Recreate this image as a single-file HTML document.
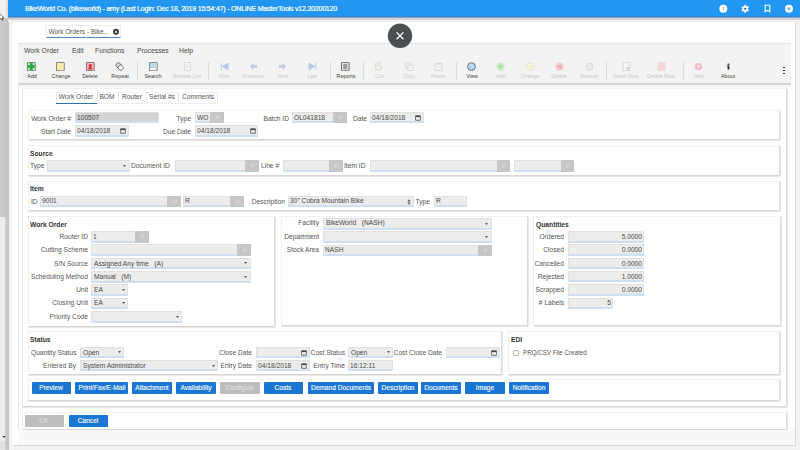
<!DOCTYPE html>
<html><head><meta charset="utf-8"><style>
html,body{margin:0;padding:0;width:800px;height:450px;overflow:hidden;background:#f1f1f1;}
body>div,body>svg{position:absolute;}
.t{font-family:'Liberation Sans',sans-serif;white-space:nowrap;line-height:1;}
</style></head><body>
<div style="left:0px;top:0px;width:800px;height:450px;background:#f3f3f3;"></div>
<div style="left:0px;top:0px;width:8px;height:17.5px;background:#f2f2f2;"></div>
<div style="left:5px;top:0px;width:3px;height:17.5px;background:linear-gradient(90deg,#f2f2f2,#d6d6d6);"></div>
<div style="left:0px;top:17.5px;width:9px;height:199px;background:linear-gradient(90deg,#cdcdcd,#c4c4c4);"></div>
<div style="left:0px;top:216.5px;width:4.5px;height:234px;background:#eeeeee;"></div>
<div style="left:4.5px;top:216.5px;width:4.5px;height:234px;background:linear-gradient(90deg,#cfcfcf,#c2c2c2);"></div>
<div style="left:0px;top:441px;width:4.5px;height:9px;background:#e2e2e2;"></div>
<svg style="left:1.5px;top:435px;width:4px;height:4px" viewBox="0 0 4 4"><path d="M0.5 1 H3.5 L2 3 Z" fill="#333"/></svg>
<svg style="left:0;top:12.5px;width:6px;height:9px" viewBox="0 0 6 9"><path d="M-0.5 0.5 L-0.5 6.5 L1 5.3 L2 7.5 L3 7.1 L2.1 5 L4 5 Z" fill="#fff" stroke="#333" stroke-width="0.7"/></svg>
<div style="left:8px;top:0px;width:792px;height:16px;background:#2196f3;"></div>
<div style="left:8px;top:16px;width:792px;height:1px;background:#2a8ad8;"></div>
<div style="left:8px;top:17px;width:792px;height:1px;background:#7fa6c8;"></div>
<div style="left:8px;top:18px;width:792px;height:2px;background:#d3d3d3;"></div>
<div style="left:8px;top:20px;width:792px;height:2px;background:#eeeeee;"></div>
<div class="t" style="left:25px;top:5.23px;font-size:7px;color:#fff;letter-spacing:-0.2px;-webkit-text-stroke:0.2px #fff;">BikeWorld Co. (bikeworld) - amy (Last Login: Dec 18, 2019 15:54:47) - ONLINE MasterTools v12.20200120</div>
<svg style="left:718px;top:4px;width:11px;height:10px" viewBox="0 0 11 10"><circle cx="5.3" cy="4.8" r="4" fill="#fff"/><rect x="4.95" y="3" width="0.7" height="3.2" fill="#d88a6a"/></svg>
<svg style="left:740px;top:4px;width:11px;height:10px" viewBox="-5.2 -4.8 11 10"><g fill="#fff"><circle r="2.9"/><rect x="-0.9" y="-3.9" width="1.8" height="1.8" transform="rotate(0)"/><rect x="-0.9" y="-3.9" width="1.8" height="1.8" transform="rotate(60)"/><rect x="-0.9" y="-3.9" width="1.8" height="1.8" transform="rotate(120)"/><rect x="-0.9" y="-3.9" width="1.8" height="1.8" transform="rotate(180)"/><rect x="-0.9" y="-3.9" width="1.8" height="1.8" transform="rotate(240)"/><rect x="-0.9" y="-3.9" width="1.8" height="1.8" transform="rotate(300)"/></g><circle r="1.1" fill="#2a6fb8"/></svg>
<svg style="left:762px;top:4px;width:11px;height:10px" viewBox="0 0 11 10"><path d="M3.2 1.2 H7.8 V7.8 L5.5 6.3 L3.2 7.8 Z" fill="none" stroke="#fff" stroke-width="1.1"/></svg>
<svg style="left:784px;top:4px;width:11px;height:10px" viewBox="0 0 11 10"><circle cx="5" cy="4.8" r="4" fill="#fff"/><path d="M3.6 3.4 L6.4 6.2 M6.4 3.4 L3.6 6.2" stroke="#2196f3" stroke-width="0.9"/></svg>
<div style="left:9px;top:22px;width:5px;height:423.5px;background:linear-gradient(90deg,#f1f1f1,#f8f8f8);"></div>
<div style="left:13px;top:22px;width:782.5px;height:423.5px;background:#fff;border-right:1px solid #d9d9d9;border-bottom:1px solid #d9d9d9;box-sizing:border-box;"></div>
<div style="left:46.2px;top:24.5px;width:75.3px;height:13px;background:#fff;border:1px solid #ececec;border-bottom:1.5px solid #4a86c5;box-sizing:border-box;"></div>
<div class="t" style="left:48.4px;top:28.87px;font-size:6.5px;color:#555;">Work Orders - Bike...</div>
<svg style="left:112px;top:27.5px;width:8px;height:8px" viewBox="0 0 8 8"><circle cx="4" cy="3.8" r="3" fill="#333"/><path d="M2.8 2.6 L5.2 5 M5.2 2.6 L2.8 5" stroke="#fff" stroke-width="0.9"/></svg>
<div style="left:17.5px;top:43px;width:773.5px;height:40px;background:#f3f3f3;border-top:1px solid #e2e2e2;box-sizing:border-box;"></div>
<div style="left:17.5px;top:83px;width:773.5px;height:2px;background:#d5d5d5;"></div>
<div style="left:19px;top:85px;width:772px;height:3px;background:#f8f8f8;"></div>
<div class="t" style="left:23.5px;top:47.23px;font-size:7px;color:#444;transform:scaleX(0.97);transform-origin:0 0;">Work Order</div>
<div class="t" style="left:71.5px;top:47.23px;font-size:7px;color:#444;transform:scaleX(0.97);transform-origin:0 0;">Edit</div>
<div class="t" style="left:95px;top:47.23px;font-size:7px;color:#444;transform:scaleX(0.97);transform-origin:0 0;">Functions</div>
<div class="t" style="left:136.5px;top:47.23px;font-size:7px;color:#444;transform:scaleX(0.97);transform-origin:0 0;">Processes</div>
<div class="t" style="left:179px;top:47.23px;font-size:7px;color:#444;transform:scaleX(0.97);transform-origin:0 0;">Help</div>
<div class="t" style="left:-118px;width:300px;text-align:center;top:74.20px;font-size:5.4px;color:#444;">Add</div>
<div class="t" style="left:-89px;width:300px;text-align:center;top:74.20px;font-size:5.4px;color:#444;">Change</div>
<div class="t" style="left:-60px;width:300px;text-align:center;top:74.20px;font-size:5.4px;color:#444;">Delete</div>
<div class="t" style="left:-30px;width:300px;text-align:center;top:74.20px;font-size:5.4px;color:#444;">Repeat</div>
<div class="t" style="left:3px;width:300px;text-align:center;top:74.20px;font-size:5.4px;color:#444;">Search</div>
<div class="t" style="left:37px;width:300px;text-align:center;top:74.20px;font-size:5.4px;color:#c9c9c9;">Browse List</div>
<div class="t" style="left:74px;width:300px;text-align:center;top:74.20px;font-size:5.4px;color:#c9c9c9;">First</div>
<div class="t" style="left:103px;width:300px;text-align:center;top:74.20px;font-size:5.4px;color:#c9c9c9;">Previous</div>
<div class="t" style="left:132.5px;width:300px;text-align:center;top:74.20px;font-size:5.4px;color:#c9c9c9;">Next</div>
<div class="t" style="left:162px;width:300px;text-align:center;top:74.20px;font-size:5.4px;color:#c9c9c9;">Last</div>
<div class="t" style="left:196px;width:300px;text-align:center;top:74.20px;font-size:5.4px;color:#444;">Reports</div>
<div class="t" style="left:229.5px;width:300px;text-align:center;top:74.20px;font-size:5.4px;color:#c9c9c9;">Cut</div>
<div class="t" style="left:259px;width:300px;text-align:center;top:74.20px;font-size:5.4px;color:#c9c9c9;">Copy</div>
<div class="t" style="left:288px;width:300px;text-align:center;top:74.20px;font-size:5.4px;color:#c9c9c9;">Paste</div>
<div class="t" style="left:322px;width:300px;text-align:center;top:74.20px;font-size:5.4px;color:#444;">View</div>
<div class="t" style="left:351px;width:300px;text-align:center;top:74.20px;font-size:5.4px;color:#c9c9c9;">Add</div>
<div class="t" style="left:380px;width:300px;text-align:center;top:74.20px;font-size:5.4px;color:#c9c9c9;">Change</div>
<div class="t" style="left:409px;width:300px;text-align:center;top:74.20px;font-size:5.4px;color:#c9c9c9;">Delete</div>
<div class="t" style="left:439px;width:300px;text-align:center;top:74.20px;font-size:5.4px;color:#c9c9c9;">Repeat</div>
<div class="t" style="left:476px;width:300px;text-align:center;top:74.20px;font-size:5.4px;color:#c9c9c9;">Insert Row</div>
<div class="t" style="left:511px;width:300px;text-align:center;top:74.20px;font-size:5.4px;color:#c9c9c9;">Delete Row</div>
<div class="t" style="left:549px;width:300px;text-align:center;top:74.20px;font-size:5.4px;color:#c9c9c9;">Help</div>
<div class="t" style="left:578px;width:300px;text-align:center;top:74.20px;font-size:5.4px;color:#444;">About</div>
<div style="left:137px;top:62px;width:0.8px;height:18px;background:#dcdcdc;"></div>
<div style="left:207.5px;top:62px;width:0.8px;height:18px;background:#dcdcdc;"></div>
<div style="left:329.5px;top:62px;width:0.8px;height:18px;background:#dcdcdc;"></div>
<div style="left:363px;top:62px;width:0.8px;height:18px;background:#dcdcdc;"></div>
<div style="left:455.5px;top:62px;width:0.8px;height:18px;background:#dcdcdc;"></div>
<div style="left:606px;top:62px;width:0.8px;height:18px;background:#dcdcdc;"></div>
<div style="left:682.5px;top:62px;width:0.8px;height:18px;background:#dcdcdc;"></div>
<svg style="left:27.0px;top:62px;width:9px;height:9px" viewBox="0 0 9 9"><rect x="0.4" y="0.4" width="7.8" height="8.4" rx="0.6" fill="#d2f7d2" stroke="#4d524d" stroke-width="0.8"/><path d="M4.3 1 V8.2 M0.9 4.6 H7.7" stroke="#2db548" stroke-width="3"/><path d="M4.3 2.2 V7 M2.1 4.6 H6.5" stroke="#22a83c" stroke-width="1.2"/></svg>
<svg style="left:56.0px;top:62px;width:9px;height:9px" viewBox="0 0 9 9"><rect x="0.4" y="0.4" width="7.8" height="8.4" rx="0.6" fill="#fbf6d8" stroke="#555" stroke-width="0.8"/><path d="M1.2 7.8 L7.4 1.2 V4.5 L4.5 7.8 Z" fill="#f0e27a"/><path d="M1.2 1.2 H7.4 V3 L3 7.8 H1.2 Z" fill="#f7efb0"/></svg>
<svg style="left:85.5px;top:62px;width:9px;height:9px" viewBox="0 0 9 9"><rect x="0.4" y="0.4" width="7.8" height="8.4" rx="0.6" fill="#f3b9bd" stroke="#5a4f50" stroke-width="0.8"/><path d="M2 7.5 Q4.3 1.2 6.6 7.5 Z" fill="#e2283a"/><circle cx="4.3" cy="3.6" r="1.6" fill="#e2283a"/></svg>
<svg style="left:115.0px;top:62px;width:9px;height:9px" viewBox="0 0 9 9"><rect x="1.2" y="1" width="4.6" height="4.6" rx="1.4" transform="rotate(40 3.5 3.3)" fill="#d8d8d8" stroke="#5e5e5e" stroke-width="0.9"/><rect x="3.4" y="3.4" width="4.6" height="4.6" rx="1.4" transform="rotate(40 5.7 5.7)" fill="#fff" stroke="#5e5e5e" stroke-width="0.9"/></svg>
<svg style="left:148.5px;top:62px;width:9px;height:9px" viewBox="0 0 9 9"><rect x="0.4" y="0.4" width="7.8" height="8.4" rx="0.6" fill="#fff" stroke="#555" stroke-width="0.8"/><rect x="0.9" y="0.9" width="6.8" height="5.2" fill="#b9dbe9"/></svg>
<svg style="left:182.5px;top:62px;width:9px;height:9px" viewBox="0 0 9 9"><rect x="1.5" y="0.5" width="6" height="8" fill="#f7f7f7" stroke="#d4d4d4" stroke-width="0.8"/><path d="M3 3 H6 M3 4.5 H6 M3 6 H6" stroke="#dadada" stroke-width="0.6"/></svg>
<svg style="left:219.5px;top:62px;width:9px;height:9px" viewBox="0 0 9 9"><path d="M1.3 1 V8 M8 1.2 L2.5 4.5 L8 7.8 Z" stroke="#b5cbe8" fill="#b5cbe8" stroke-width="1"/></svg>
<svg style="left:248.5px;top:62px;width:9px;height:9px" viewBox="0 0 9 9"><path d="M1 4.5 L4.5 1.2 V3.2 H8 V5.8 H4.5 V7.8 Z" fill="#b7cbe8"/></svg>
<svg style="left:278.0px;top:62px;width:9px;height:9px" viewBox="0 0 9 9"><path d="M8 4.5 L4.5 1.2 V3.2 H1 V5.8 H4.5 V7.8 Z" fill="#b7cbe8"/></svg>
<svg style="left:307.5px;top:62px;width:9px;height:9px" viewBox="0 0 9 9"><path d="M7.7 1 V8 M1 1.2 L6.5 4.5 L1 7.8 Z" stroke="#b5cbe8" fill="#b5cbe8" stroke-width="1"/></svg>
<svg style="left:341.0px;top:62px;width:9px;height:9px" viewBox="0 0 9 9"><rect x="0.5" y="0.4" width="7.6" height="8.4" rx="0.5" fill="#f0f0f0" stroke="#5b5b5b" stroke-width="0.9"/><rect x="2.2" y="1.8" width="4.2" height="5.6" fill="#9c9c9c"/></svg>
<svg style="left:375.0px;top:62px;width:9px;height:9px" viewBox="0 0 9 9"><rect x="0.8" y="0.8" width="5" height="7" fill="#f4f4f4" stroke="#d2d2d2" stroke-width="0.8"/><path d="M1.8 3 H4.5 M1.8 5 H4.5" stroke="#d8d8d8" stroke-width="0.6"/><path d="M5.2 3.5 L8.5 5.2 L5.6 7.8 Z" fill="#eadcca"/></svg>
<svg style="left:404.5px;top:62px;width:9px;height:9px" viewBox="0 0 9 9"><rect x="0.8" y="0.8" width="5" height="5.5" fill="#f4f4f4" stroke="#d2d2d2" stroke-width="0.8"/><rect x="3" y="3" width="5" height="5.5" fill="#f4f4f4" stroke="#d2d2d2" stroke-width="0.8"/></svg>
<svg style="left:433.5px;top:62px;width:9px;height:9px" viewBox="0 0 9 9"><rect x="1" y="1.5" width="7" height="7" fill="#f2f2f2" stroke="#d2d2d2" stroke-width="0.8"/><rect x="3" y="0.5" width="3" height="2" fill="#d8d8d8"/></svg>
<svg style="left:467.0px;top:62px;width:9px;height:9px" viewBox="0 0 9 9"><circle cx="4.5" cy="4.6" r="3.9" fill="#a9d3e6" stroke="#646a72" stroke-width="0.9"/><path d="M2.5 3.5 Q4 2 5.5 3.2 Q5 5 6.8 6" fill="none" stroke="#e6f3f8" stroke-width="0.9"/></svg>
<svg style="left:496.0px;top:62px;width:9px;height:9px" viewBox="0 0 9 9"><circle cx="4.5" cy="4.6" r="3.9" fill="#c9f0c4" stroke="#d4dcd4" stroke-width="0.7"/><path d="M4.5 2.2 V7 M2.1 4.6 H6.9" stroke="#9fdc98" stroke-width="1.4"/></svg>
<svg style="left:525.5px;top:62px;width:9px;height:9px" viewBox="0 0 9 9"><circle cx="4.5" cy="4.6" r="3.9" fill="#f3f3dc" stroke="#dcdcd0" stroke-width="0.7"/><circle cx="4.5" cy="4.6" r="1.6" fill="#f6f0b8"/></svg>
<svg style="left:554.5px;top:62px;width:9px;height:9px" viewBox="0 0 9 9"><circle cx="4.5" cy="4.6" r="3.9" fill="#f6caca" stroke="#e4d4d4" stroke-width="0.6"/><path d="M2.5 4.6 H6.5" stroke="#ea9a9a" stroke-width="1.3"/></svg>
<svg style="left:584.5px;top:62px;width:9px;height:9px" viewBox="0 0 9 9"><circle cx="4.5" cy="4.6" r="3.6" fill="#f0f0f0" stroke="#cdcdcd" stroke-width="0.8"/><circle cx="4.5" cy="4.6" r="1.6" fill="none" stroke="#d2d2d2" stroke-width="0.7"/></svg>
<svg style="left:621.5px;top:62px;width:9px;height:9px" viewBox="0 0 9 9"><rect x="1" y="0.8" width="7" height="7.6" fill="#f4f4f4" stroke="#cfcfcf" stroke-width="0.8"/><rect x="4.5" y="5" width="2.5" height="2.5" fill="#b9d9b4"/></svg>
<svg style="left:656.5px;top:62px;width:9px;height:9px" viewBox="0 0 9 9"><rect x="1" y="0.8" width="7" height="7.6" fill="#f6dada" stroke="#eed0d0" stroke-width="0.6"/><path d="M1 3.5 H8 M1 6 H8" stroke="#f0caca" stroke-width="0.6"/></svg>
<svg style="left:694.0px;top:62px;width:9px;height:9px" viewBox="0 0 9 9"><circle cx="4.5" cy="4.6" r="3.7" fill="#f6bcc3"/><path d="M2.6 3.6 Q4.5 2.8 6.4 3.6 L4.5 6.8 Z" fill="#fce4e7"/></svg>
<svg style="left:723.5px;top:62px;width:9px;height:9px" viewBox="0 0 9 9"><rect x="3.6" y="1.6" width="1.8" height="1.3" fill="#222"/><path d="M3.1 3.6 H5.3 V7.6 H3.6 V4.4 H3.1 Z" fill="#222"/></svg>
<div style="left:783.3px;top:66.5px;width:1.5px;height:1.5px;background:#333;"></div>
<div style="left:783.3px;top:69.5px;width:1.5px;height:1.5px;background:#333;"></div>
<div style="left:783.3px;top:72.5px;width:1.5px;height:1.5px;background:#333;"></div>
<div style="left:18px;top:83px;width:1px;height:347px;background:#e6e6e6;"></div>
<div style="left:22px;top:88px;width:765px;height:319px;background:#fff;border:1px solid #f1f1f1;border-right-color:#dadada;border-bottom-color:#d6d6d6;border-radius:1.5px;box-shadow:0.3px 0.5px 0.8px rgba(0,0,0,.10);box-sizing:border-box;"></div>
<div style="left:55.6px;top:92px;width:162.2px;height:12px;border:1px solid #f0f0f0;border-bottom-color:#ececec;box-sizing:border-box;"></div>
<div class="t" style="left:-73.8px;width:300px;text-align:center;top:93.23px;font-size:7.0px;color:#555;transform:scaleX(0.95);transform-origin:50% 0;">Work Order</div>
<div class="t" style="left:-42.80000000000001px;width:300px;text-align:center;top:93.23px;font-size:7.0px;color:#555;transform:scaleX(0.95);transform-origin:50% 0;">BOM</div>
<div class="t" style="left:-18.350000000000023px;width:300px;text-align:center;top:93.23px;font-size:7.0px;color:#555;transform:scaleX(0.95);transform-origin:50% 0;">Router</div>
<div class="t" style="left:12.050000000000011px;width:300px;text-align:center;top:93.23px;font-size:7.0px;color:#555;transform:scaleX(0.95);transform-origin:50% 0;">Serial #s</div>
<div class="t" style="left:48.10000000000002px;width:300px;text-align:center;top:93.23px;font-size:7.0px;color:#555;transform:scaleX(0.95);transform-origin:50% 0;">Comments</div>
<div style="left:55.6px;top:92px;width:1px;height:12px;background:#e9e9e9;"></div>
<div style="left:97px;top:92px;width:1px;height:12px;background:#e9e9e9;"></div>
<div style="left:118px;top:92px;width:1px;height:12px;background:#e9e9e9;"></div>
<div style="left:145.5px;top:92px;width:1px;height:12px;background:#e9e9e9;"></div>
<div style="left:178.4px;top:92px;width:1px;height:12px;background:#e9e9e9;"></div>
<div style="left:217.3px;top:92px;width:1px;height:12px;background:#e9e9e9;"></div>
<div style="left:55.6px;top:103px;width:41.6px;height:1.2px;background:#2f6fb8;"></div>
<div style="left:28px;top:110px;width:752px;height:30px;background:#fff;border:1px solid #f1f1f1;border-right-color:#dadada;border-bottom-color:#d6d6d6;border-radius:1.5px;box-shadow:0.3px 0.5px 0.8px rgba(0,0,0,.10);box-sizing:border-box;"></div>
<div class="t" style="left:-229px;width:300px;text-align:right;top:115.00px;font-size:7.0px;color:#555;transform:scaleX(0.95);transform-origin:100% 0;">Work Order #</div>
<div style="left:74.5px;top:112px;width:84.19999999999999px;height:11.200000000000003px;background:#d3d3d3;border:0.8px solid #e0e0e0;border-bottom:2px solid #cde0f3;border-radius:1px;box-sizing:border-box;"></div>
<div class="t" style="left:76.7px;top:114.00px;font-size:7.0px;color:#4a4a4a;transform:scaleX(0.95);transform-origin:0 0;">100507</div>
<div class="t" style="left:-229px;width:300px;text-align:right;top:128.00px;font-size:7.0px;color:#555;transform:scaleX(0.95);transform-origin:100% 0;">Start Date</div>
<div style="left:74.5px;top:125px;width:54.0px;height:11.5px;background:#ececec;border:0.8px solid #e0e0e0;border-bottom:2px solid #cde0f3;border-radius:1px;box-sizing:border-box;"></div>
<div class="t" style="left:76.7px;top:127.00px;font-size:7.0px;color:#4a4a4a;transform:scaleX(0.95);transform-origin:0 0;">04/18/2018</div>
<svg style="left:120.0px;top:127.95000000000002px;width:6px;height:6px" viewBox="0 0 6 6"><rect x="0.7" y="0.8" width="4.6" height="4.4" fill="none" stroke="#444" stroke-width="0.7"/><rect x="0.7" y="0.8" width="4.6" height="1.3" fill="#444"/></svg>
<div class="t" style="left:-108.6px;width:300px;text-align:right;top:115.00px;font-size:7.0px;color:#555;transform:scaleX(0.95);transform-origin:100% 0;">Type</div>
<div style="left:195px;top:112px;width:28.80000000000001px;height:11.200000000000003px;background:#ececec;border:0.8px solid #e0e0e0;border-bottom:2px solid #cde0f3;border-radius:1px;box-sizing:border-box;"></div>
<div class="t" style="left:197.2px;top:114.00px;font-size:7.0px;color:#4a4a4a;transform:scaleX(0.95);transform-origin:0 0;">WO</div>
<div style="left:210.3px;top:112px;width:13.5px;height:11.200000000000003px;background:#c6c6c6;"></div>
<svg style="left:214.8px;top:114.89999999999999px;width:5px;height:5px" viewBox="0 0 5 5"><circle cx="2.8" cy="2.2" r="1.5" fill="none" stroke="#e4e4e4" stroke-width="0.7"/><path d="M1.8 3.2 L0.6 4.4" stroke="#e4e4e4" stroke-width="0.8"/></svg>
<div class="t" style="left:-108.6px;width:300px;text-align:right;top:128.00px;font-size:7.0px;color:#555;transform:scaleX(0.95);transform-origin:100% 0;">Due Date</div>
<div style="left:195px;top:125px;width:63px;height:11.5px;background:#ececec;border:0.8px solid #e0e0e0;border-bottom:2px solid #cde0f3;border-radius:1px;box-sizing:border-box;"></div>
<div class="t" style="left:197.2px;top:127.00px;font-size:7.0px;color:#4a4a4a;transform:scaleX(0.95);transform-origin:0 0;">04/18/2018</div>
<svg style="left:249.5px;top:127.95000000000002px;width:6px;height:6px" viewBox="0 0 6 6"><rect x="0.7" y="0.8" width="4.6" height="4.4" fill="none" stroke="#444" stroke-width="0.7"/><rect x="0.7" y="0.8" width="4.6" height="1.3" fill="#444"/></svg>
<div class="t" style="left:-11.399999999999977px;width:300px;text-align:right;top:115.00px;font-size:7.0px;color:#555;transform:scaleX(0.95);transform-origin:100% 0;">Batch ID</div>
<div style="left:291.6px;top:112px;width:55.099999999999966px;height:11.200000000000003px;background:#ececec;border:0.8px solid #e0e0e0;border-bottom:2px solid #cde0f3;border-radius:1px;box-sizing:border-box;"></div>
<div class="t" style="left:293.8px;top:114.00px;font-size:7.0px;color:#4a4a4a;transform:scaleX(0.95);transform-origin:0 0;">OL041818</div>
<div style="left:333.2px;top:112px;width:13.5px;height:11.200000000000003px;background:#c6c6c6;"></div>
<svg style="left:337.7px;top:114.89999999999999px;width:5px;height:5px" viewBox="0 0 5 5"><circle cx="2.8" cy="2.2" r="1.5" fill="none" stroke="#e4e4e4" stroke-width="0.7"/><path d="M1.8 3.2 L0.6 4.4" stroke="#e4e4e4" stroke-width="0.8"/></svg>
<div class="t" style="left:66.5px;width:300px;text-align:right;top:115.00px;font-size:7.0px;color:#555;transform:scaleX(0.95);transform-origin:100% 0;">Date</div>
<div style="left:370px;top:112px;width:53.80000000000001px;height:11.200000000000003px;background:#ececec;border:0.8px solid #e0e0e0;border-bottom:2px solid #cde0f3;border-radius:1px;box-sizing:border-box;"></div>
<div class="t" style="left:372.2px;top:114.00px;font-size:7.0px;color:#4a4a4a;transform:scaleX(0.95);transform-origin:0 0;">04/18/2018</div>
<svg style="left:415.3px;top:114.8px;width:6px;height:6px" viewBox="0 0 6 6"><rect x="0.7" y="0.8" width="4.6" height="4.4" fill="none" stroke="#444" stroke-width="0.7"/><rect x="0.7" y="0.8" width="4.6" height="1.3" fill="#444"/></svg>
<div style="left:28px;top:145px;width:752px;height:31px;background:#fff;border:1px solid #f1f1f1;border-right-color:#dadada;border-bottom-color:#d6d6d6;border-radius:1.5px;box-shadow:0.3px 0.5px 0.8px rgba(0,0,0,.10);box-sizing:border-box;"></div>
<div class="t" style="left:30px;top:150.00px;font-size:7.3px;color:#333;font-weight:bold;transform:scaleX(0.92);transform-origin:0 0;">Source</div>
<div class="t" style="left:30px;top:162.00px;font-size:7.0px;color:#555;transform:scaleX(0.95);transform-origin:0 0;">Type</div>
<div style="left:47.2px;top:160.3px;width:82.49999999999999px;height:11.5px;background:#ececec;border:0.8px solid #e0e0e0;border-bottom:2px solid #cde0f3;border-radius:1px;box-sizing:border-box;"></div>
<svg style="left:123.19999999999999px;top:164.85000000000002px;width:3px;height:2px" viewBox="0 0 3 2"><path d="M0 0 H3 L1.5 2 Z" fill="#555"/></svg>
<div class="t" style="left:131.3px;top:162.00px;font-size:7.0px;color:#555;transform:scaleX(0.95);transform-origin:0 0;">Document ID</div>
<div style="left:174.5px;top:160.3px;width:84.25px;height:11.5px;background:#ececec;border:0.8px solid #e0e0e0;border-bottom:2px solid #cde0f3;border-radius:1px;box-sizing:border-box;"></div>
<div style="left:245.25px;top:160.3px;width:13.5px;height:11.5px;background:#c6c6c6;"></div>
<svg style="left:249.75px;top:163.35000000000002px;width:5px;height:5px" viewBox="0 0 5 5"><circle cx="2.8" cy="2.2" r="1.5" fill="none" stroke="#e4e4e4" stroke-width="0.7"/><path d="M1.8 3.2 L0.6 4.4" stroke="#e4e4e4" stroke-width="0.8"/></svg>
<div class="t" style="left:261.3px;top:162.00px;font-size:7.0px;color:#555;transform:scaleX(0.95);transform-origin:0 0;">Line #</div>
<div style="left:283px;top:160.3px;width:59.5px;height:11.5px;background:#ececec;border:0.8px solid #e0e0e0;border-bottom:2px solid #cde0f3;border-radius:1px;box-sizing:border-box;"></div>
<div style="left:329.0px;top:160.3px;width:13.5px;height:11.5px;background:#c6c6c6;"></div>
<svg style="left:333.5px;top:163.35000000000002px;width:5px;height:5px" viewBox="0 0 5 5"><circle cx="2.8" cy="2.2" r="1.5" fill="none" stroke="#e4e4e4" stroke-width="0.7"/><path d="M1.8 3.2 L0.6 4.4" stroke="#e4e4e4" stroke-width="0.8"/></svg>
<div class="t" style="left:343.8px;top:162.00px;font-size:7.0px;color:#555;transform:scaleX(0.95);transform-origin:0 0;">Item ID</div>
<div style="left:370px;top:160.3px;width:140.2px;height:11.5px;background:#ececec;border:0.8px solid #e0e0e0;border-bottom:2px solid #cde0f3;border-radius:1px;box-sizing:border-box;"></div>
<div style="left:496.7px;top:160.3px;width:13.5px;height:11.5px;background:#c6c6c6;"></div>
<svg style="left:501.2px;top:163.35000000000002px;width:5px;height:5px" viewBox="0 0 5 5"><circle cx="2.8" cy="2.2" r="1.5" fill="none" stroke="#e4e4e4" stroke-width="0.7"/><path d="M1.8 3.2 L0.6 4.4" stroke="#e4e4e4" stroke-width="0.8"/></svg>
<div style="left:514px;top:160.3px;width:60px;height:11.5px;background:#ececec;border:0.8px solid #e0e0e0;border-bottom:2px solid #cde0f3;border-radius:1px;box-sizing:border-box;"></div>
<div style="left:560.5px;top:160.3px;width:13.5px;height:11.5px;background:#c6c6c6;"></div>
<svg style="left:565px;top:163.35000000000002px;width:5px;height:5px" viewBox="0 0 5 5"><circle cx="2.8" cy="2.2" r="1.5" fill="none" stroke="#e4e4e4" stroke-width="0.7"/><path d="M1.8 3.2 L0.6 4.4" stroke="#e4e4e4" stroke-width="0.8"/></svg>
<div style="left:28px;top:181px;width:752px;height:30px;background:#fff;border:1px solid #f1f1f1;border-right-color:#dadada;border-bottom-color:#d6d6d6;border-radius:1.5px;box-shadow:0.3px 0.5px 0.8px rgba(0,0,0,.10);box-sizing:border-box;"></div>
<div class="t" style="left:30px;top:185.00px;font-size:7.3px;color:#333;font-weight:bold;transform:scaleX(0.92);transform-origin:0 0;">Item</div>
<div class="t" style="left:30.5px;top:198.00px;font-size:7.0px;color:#555;transform:scaleX(0.95);transform-origin:0 0;">ID</div>
<div style="left:40px;top:196.2px;width:140.5px;height:11.300000000000011px;background:#ececec;border:0.8px solid #e0e0e0;border-bottom:2px solid #cde0f3;border-radius:1px;box-sizing:border-box;"></div>
<div class="t" style="left:42.2px;top:197.00px;font-size:7.0px;color:#4a4a4a;transform:scaleX(0.95);transform-origin:0 0;">9001</div>
<div style="left:167.0px;top:196.2px;width:13.5px;height:11.300000000000011px;background:#c6c6c6;"></div>
<svg style="left:171.5px;top:199.15px;width:5px;height:5px" viewBox="0 0 5 5"><circle cx="2.8" cy="2.2" r="1.5" fill="none" stroke="#e4e4e4" stroke-width="0.7"/><path d="M1.8 3.2 L0.6 4.4" stroke="#e4e4e4" stroke-width="0.8"/></svg>
<div style="left:183px;top:196.2px;width:60.69999999999999px;height:11.300000000000011px;background:#ececec;border:0.8px solid #e0e0e0;border-bottom:2px solid #cde0f3;border-radius:1px;box-sizing:border-box;"></div>
<div class="t" style="left:185.2px;top:197.00px;font-size:7.0px;color:#4a4a4a;transform:scaleX(0.95);transform-origin:0 0;">R</div>
<div style="left:230.2px;top:196.2px;width:13.5px;height:11.300000000000011px;background:#c6c6c6;"></div>
<svg style="left:234.7px;top:199.15px;width:5px;height:5px" viewBox="0 0 5 5"><circle cx="2.8" cy="2.2" r="1.5" fill="none" stroke="#e4e4e4" stroke-width="0.7"/><path d="M1.8 3.2 L0.6 4.4" stroke="#e4e4e4" stroke-width="0.8"/></svg>
<div class="t" style="left:-15.100000000000023px;width:300px;text-align:right;top:198.00px;font-size:7.0px;color:#555;transform:scaleX(0.95);transform-origin:100% 0;">Description</div>
<div style="left:287.9px;top:196.2px;width:126.10000000000002px;height:11.300000000000011px;background:#ececec;border:0.8px solid #e0e0e0;border-bottom:2px solid #cde0f3;border-radius:1px;box-sizing:border-box;"></div>
<div class="t" style="left:290.09999999999997px;top:197.00px;font-size:7.0px;color:#4a4a4a;transform:scaleX(0.95);transform-origin:0 0;">30" Cobra Mountain Bike</div>
<svg style="left:407px;top:199.25px;width:4px;height:6px" viewBox="0 0 4 6"><path d="M0.3 2.5 H3.7 L2 0.2 Z M0.3 3.5 H3.7 L2 5.8 Z" fill="#555"/></svg>
<div class="t" style="left:130px;width:300px;text-align:right;top:198.00px;font-size:7.0px;color:#555;transform:scaleX(0.95);transform-origin:100% 0;">Type</div>
<div style="left:434px;top:196.2px;width:32.5px;height:11.300000000000011px;background:#ececec;border:0.8px solid #e0e0e0;border-bottom:2px solid #cde0f3;border-radius:1px;box-sizing:border-box;"></div>
<div class="t" style="left:436.2px;top:197.00px;font-size:7.0px;color:#4a4a4a;transform:scaleX(0.95);transform-origin:0 0;">R</div>
<div style="left:28px;top:216px;width:247px;height:110.5px;background:#fff;border:1px solid #f1f1f1;border-right-color:#dadada;border-bottom-color:#d6d6d6;border-radius:1.5px;box-shadow:0.3px 0.5px 0.8px rgba(0,0,0,.10);box-sizing:border-box;"></div>
<div class="t" style="left:30px;top:221.00px;font-size:7.3px;color:#333;font-weight:bold;transform:scaleX(0.92);transform-origin:0 0;">Work Order</div>
<div class="t" style="left:-212.2px;width:300px;text-align:right;top:233.00px;font-size:7.0px;color:#555;transform:scaleX(0.95);transform-origin:100% 0;">Router ID</div>
<div class="t" style="left:-212.2px;width:300px;text-align:right;top:246.00px;font-size:7.0px;color:#555;transform:scaleX(0.95);transform-origin:100% 0;">Cutting Scheme</div>
<div class="t" style="left:-212.2px;width:300px;text-align:right;top:260.00px;font-size:7.0px;color:#555;transform:scaleX(0.95);transform-origin:100% 0;">S/N Source</div>
<div class="t" style="left:-212.2px;width:300px;text-align:right;top:273.00px;font-size:7.0px;color:#555;transform:scaleX(0.95);transform-origin:100% 0;">Scheduling Method</div>
<div class="t" style="left:-212.2px;width:300px;text-align:right;top:286.00px;font-size:7.0px;color:#555;transform:scaleX(0.95);transform-origin:100% 0;">Unit</div>
<div class="t" style="left:-212.2px;width:300px;text-align:right;top:299.00px;font-size:7.0px;color:#555;transform:scaleX(0.95);transform-origin:100% 0;">Closing Unit</div>
<div class="t" style="left:-212.2px;width:300px;text-align:right;top:313.00px;font-size:7.0px;color:#555;transform:scaleX(0.95);transform-origin:100% 0;">Priority Code</div>
<div style="left:91.2px;top:231.2px;width:57.39999999999999px;height:11.599999999999994px;background:#ececec;border:0.8px solid #e0e0e0;border-bottom:2px solid #cde0f3;border-radius:1px;box-sizing:border-box;"></div>
<div class="t" style="left:93.4px;top:233.00px;font-size:7.0px;color:#4a4a4a;transform:scaleX(0.95);transform-origin:0 0;">1</div>
<div style="left:135.1px;top:231.2px;width:13.5px;height:11.599999999999994px;background:#c6c6c6;"></div>
<svg style="left:139.6px;top:234.3px;width:5px;height:5px" viewBox="0 0 5 5"><circle cx="2.8" cy="2.2" r="1.5" fill="none" stroke="#e4e4e4" stroke-width="0.7"/><path d="M1.8 3.2 L0.6 4.4" stroke="#e4e4e4" stroke-width="0.8"/></svg>
<div style="left:91.2px;top:244.4px;width:159.60000000000002px;height:11.599999999999994px;background:#ececec;border:0.8px solid #e0e0e0;border-bottom:2px solid #cde0f3;border-radius:1px;box-sizing:border-box;"></div>
<div style="left:237.3px;top:244.4px;width:13.5px;height:11.599999999999994px;background:#c6c6c6;"></div>
<svg style="left:241.8px;top:247.5px;width:5px;height:5px" viewBox="0 0 5 5"><circle cx="2.8" cy="2.2" r="1.5" fill="none" stroke="#e4e4e4" stroke-width="0.7"/><path d="M1.8 3.2 L0.6 4.4" stroke="#e4e4e4" stroke-width="0.8"/></svg>
<div style="left:91.2px;top:257.8px;width:159.60000000000002px;height:11.600000000000023px;background:#ececec;border:0.8px solid #e0e0e0;border-bottom:2px solid #cde0f3;border-radius:1px;box-sizing:border-box;"></div>
<div class="t" style="left:94.4px;top:260.00px;font-size:7.0px;color:#4a4a4a;transform:scaleX(0.95);transform-origin:0 0;">Assigned Any time &nbsp; (A)</div>
<svg style="left:244.3px;top:262.40000000000003px;width:3px;height:2px" viewBox="0 0 3 2"><path d="M0 0 H3 L1.5 2 Z" fill="#555"/></svg>
<div style="left:91.2px;top:271.1px;width:159.60000000000002px;height:11.600000000000023px;background:#ececec;border:0.8px solid #e0e0e0;border-bottom:2px solid #cde0f3;border-radius:1px;box-sizing:border-box;"></div>
<div class="t" style="left:94.4px;top:273.00px;font-size:7.0px;color:#4a4a4a;transform:scaleX(0.95);transform-origin:0 0;">Manual &nbsp; (M)</div>
<svg style="left:244.3px;top:275.70000000000005px;width:3px;height:2px" viewBox="0 0 3 2"><path d="M0 0 H3 L1.5 2 Z" fill="#555"/></svg>
<div style="left:91.2px;top:284.4px;width:37.10000000000001px;height:11.600000000000023px;background:#ececec;border:0.8px solid #e0e0e0;border-bottom:2px solid #cde0f3;border-radius:1px;box-sizing:border-box;"></div>
<div class="t" style="left:94.4px;top:286.00px;font-size:7.0px;color:#4a4a4a;transform:scaleX(0.95);transform-origin:0 0;">EA</div>
<svg style="left:121.80000000000001px;top:289.0px;width:3px;height:2px" viewBox="0 0 3 2"><path d="M0 0 H3 L1.5 2 Z" fill="#555"/></svg>
<div style="left:91.2px;top:297.8px;width:37.10000000000001px;height:11.600000000000023px;background:#ececec;border:0.8px solid #e0e0e0;border-bottom:2px solid #cde0f3;border-radius:1px;box-sizing:border-box;"></div>
<div class="t" style="left:94.4px;top:299.00px;font-size:7.0px;color:#4a4a4a;transform:scaleX(0.95);transform-origin:0 0;">EA</div>
<svg style="left:121.80000000000001px;top:302.40000000000003px;width:3px;height:2px" viewBox="0 0 3 2"><path d="M0 0 H3 L1.5 2 Z" fill="#555"/></svg>
<div style="left:91.2px;top:311.1px;width:91.3px;height:11.600000000000023px;background:#ececec;border:0.8px solid #e0e0e0;border-bottom:2px solid #cde0f3;border-radius:1px;box-sizing:border-box;"></div>
<svg style="left:176.0px;top:315.70000000000005px;width:3px;height:2px" viewBox="0 0 3 2"><path d="M0 0 H3 L1.5 2 Z" fill="#555"/></svg>
<div style="left:281px;top:216px;width:247px;height:110px;background:#fff;border:1px solid #f1f1f1;border-right-color:#dadada;border-bottom-color:#d6d6d6;border-radius:1.5px;box-shadow:0.3px 0.5px 0.8px rgba(0,0,0,.10);box-sizing:border-box;"></div>
<div class="t" style="left:19px;width:300px;text-align:right;top:219.00px;font-size:7.0px;color:#555;transform:scaleX(0.95);transform-origin:100% 0;">Facility</div>
<div style="left:322.5px;top:218px;width:169.39999999999998px;height:11.5px;background:#ececec;border:0.8px solid #e0e0e0;border-bottom:2px solid #cde0f3;border-radius:1px;box-sizing:border-box;"></div>
<div class="t" style="left:325.7px;top:219.00px;font-size:7.0px;color:#4a4a4a;transform:scaleX(0.95);transform-origin:0 0;">BikeWorld &nbsp; (NASH)</div>
<svg style="left:485.4px;top:222.55px;width:3px;height:2px" viewBox="0 0 3 2"><path d="M0 0 H3 L1.5 2 Z" fill="#555"/></svg>
<div class="t" style="left:19px;width:300px;text-align:right;top:233.00px;font-size:7.0px;color:#555;transform:scaleX(0.95);transform-origin:100% 0;">Department</div>
<div style="left:322.5px;top:231px;width:169.39999999999998px;height:11.699999999999989px;background:#ececec;border:0.8px solid #e0e0e0;border-bottom:2px solid #cde0f3;border-radius:1px;box-sizing:border-box;"></div>
<svg style="left:485.4px;top:235.65px;width:3px;height:2px" viewBox="0 0 3 2"><path d="M0 0 H3 L1.5 2 Z" fill="#555"/></svg>
<div class="t" style="left:19px;width:300px;text-align:right;top:246.00px;font-size:7.0px;color:#555;transform:scaleX(0.95);transform-origin:100% 0;">Stock Area</div>
<div style="left:322.5px;top:244.5px;width:169.39999999999998px;height:11.5px;background:#ececec;border:0.8px solid #e0e0e0;border-bottom:2px solid #cde0f3;border-radius:1px;box-sizing:border-box;"></div>
<div class="t" style="left:324.7px;top:246.00px;font-size:7.0px;color:#4a4a4a;transform:scaleX(0.95);transform-origin:0 0;">NASH</div>
<div style="left:478.4px;top:244.5px;width:13.5px;height:11.5px;background:#c6c6c6;"></div>
<svg style="left:482.9px;top:247.55px;width:5px;height:5px" viewBox="0 0 5 5"><circle cx="2.8" cy="2.2" r="1.5" fill="none" stroke="#e4e4e4" stroke-width="0.7"/><path d="M1.8 3.2 L0.6 4.4" stroke="#e4e4e4" stroke-width="0.8"/></svg>
<div style="left:533px;top:216px;width:248px;height:110px;background:#fff;border:1px solid #f1f1f1;border-right-color:#dadada;border-bottom-color:#d6d6d6;border-radius:1.5px;box-shadow:0.3px 0.5px 0.8px rgba(0,0,0,.10);box-sizing:border-box;"></div>
<div class="t" style="left:535.5px;top:221.00px;font-size:7.3px;color:#333;font-weight:bold;transform:scaleX(0.92);transform-origin:0 0;">Quantities</div>
<div class="t" style="left:264px;width:300px;text-align:right;top:233.00px;font-size:7.0px;color:#555;transform:scaleX(0.95);transform-origin:100% 0;">Ordered</div>
<div style="left:567.5px;top:231px;width:76.20000000000005px;height:11.5px;background:#ececec;border:0.8px solid #e0e0e0;border-bottom:2px solid #cde0f3;border-radius:1px;box-sizing:border-box;"></div>
<div class="t" style="left:341.9000000000001px;width:300px;text-align:right;top:233.00px;font-size:7.0px;color:#4a4a4a;transform:scaleX(0.95);transform-origin:100% 0;">5.0000</div>
<div class="t" style="left:264px;width:300px;text-align:right;top:246.00px;font-size:7.0px;color:#555;transform:scaleX(0.95);transform-origin:100% 0;">Closed</div>
<div style="left:567.5px;top:244.3px;width:76.20000000000005px;height:11.5px;background:#ececec;border:0.8px solid #e0e0e0;border-bottom:2px solid #cde0f3;border-radius:1px;box-sizing:border-box;"></div>
<div class="t" style="left:341.9000000000001px;width:300px;text-align:right;top:246.00px;font-size:7.0px;color:#4a4a4a;transform:scaleX(0.95);transform-origin:100% 0;">0.0000</div>
<div class="t" style="left:264px;width:300px;text-align:right;top:260.00px;font-size:7.0px;color:#555;transform:scaleX(0.95);transform-origin:100% 0;">Cancelled</div>
<div style="left:567.5px;top:257.6px;width:76.20000000000005px;height:11.5px;background:#ececec;border:0.8px solid #e0e0e0;border-bottom:2px solid #cde0f3;border-radius:1px;box-sizing:border-box;"></div>
<div class="t" style="left:341.9000000000001px;width:300px;text-align:right;top:260.00px;font-size:7.0px;color:#4a4a4a;transform:scaleX(0.95);transform-origin:100% 0;">0.0000</div>
<div class="t" style="left:264px;width:300px;text-align:right;top:273.00px;font-size:7.0px;color:#555;transform:scaleX(0.95);transform-origin:100% 0;">Rejected</div>
<div style="left:567.5px;top:270.9px;width:76.20000000000005px;height:11.5px;background:#ececec;border:0.8px solid #e0e0e0;border-bottom:2px solid #cde0f3;border-radius:1px;box-sizing:border-box;"></div>
<div class="t" style="left:341.9000000000001px;width:300px;text-align:right;top:273.00px;font-size:7.0px;color:#4a4a4a;transform:scaleX(0.95);transform-origin:100% 0;">1.0000</div>
<div class="t" style="left:264px;width:300px;text-align:right;top:286.00px;font-size:7.0px;color:#555;transform:scaleX(0.95);transform-origin:100% 0;">Scrapped</div>
<div style="left:567.5px;top:284.2px;width:76.20000000000005px;height:11.5px;background:#ececec;border:0.8px solid #e0e0e0;border-bottom:2px solid #cde0f3;border-radius:1px;box-sizing:border-box;"></div>
<div class="t" style="left:341.9000000000001px;width:300px;text-align:right;top:286.00px;font-size:7.0px;color:#4a4a4a;transform:scaleX(0.95);transform-origin:100% 0;">0.0000</div>
<div class="t" style="left:264px;width:300px;text-align:right;top:299.00px;font-size:7.0px;color:#555;transform:scaleX(0.95);transform-origin:100% 0;"># Labels</div>
<div style="left:567.5px;top:297.5px;width:45.299999999999955px;height:11.5px;background:#ececec;border:0.8px solid #e0e0e0;border-bottom:2px solid #cde0f3;border-radius:1px;box-sizing:border-box;"></div>
<div class="t" style="left:311.0px;width:300px;text-align:right;top:299.00px;font-size:7.0px;color:#4a4a4a;transform:scaleX(0.95);transform-origin:100% 0;">5</div>
<div style="left:28px;top:331px;width:474px;height:44px;background:#fff;border:1px solid #f1f1f1;border-right-color:#dadada;border-bottom-color:#d6d6d6;border-radius:1.5px;box-shadow:0.3px 0.5px 0.8px rgba(0,0,0,.10);box-sizing:border-box;"></div>
<div class="t" style="left:30px;top:336.00px;font-size:7.3px;color:#333;font-weight:bold;transform:scaleX(0.92);transform-origin:0 0;">Status</div>
<div class="t" style="left:30.5px;top:349.00px;font-size:7.0px;color:#555;transform:scaleX(0.95);transform-origin:0 0;">Quantity Status</div>
<div style="left:79.5px;top:347px;width:44.8px;height:11.300000000000011px;background:#ececec;border:0.8px solid #e0e0e0;border-bottom:2px solid #cde0f3;border-radius:1px;box-sizing:border-box;"></div>
<div class="t" style="left:82.7px;top:349.00px;font-size:7.0px;color:#4a4a4a;transform:scaleX(0.95);transform-origin:0 0;">Open</div>
<svg style="left:117.8px;top:351.45px;width:3px;height:2px" viewBox="0 0 3 2"><path d="M0 0 H3 L1.5 2 Z" fill="#555"/></svg>
<div class="t" style="left:-223.7px;width:300px;text-align:right;top:362.00px;font-size:7.0px;color:#555;transform:scaleX(0.95);transform-origin:100% 0;">Entered By</div>
<div style="left:79.5px;top:360.3px;width:138.5px;height:11.199999999999989px;background:#ececec;border:0.8px solid #e0e0e0;border-bottom:2px solid #cde0f3;border-radius:1px;box-sizing:border-box;"></div>
<div class="t" style="left:82.7px;top:362.00px;font-size:7.0px;color:#4a4a4a;transform:scaleX(0.95);transform-origin:0 0;">System Administrator</div>
<svg style="left:211.5px;top:364.7px;width:3px;height:2px" viewBox="0 0 3 2"><path d="M0 0 H3 L1.5 2 Z" fill="#555"/></svg>
<div class="t" style="left:-48px;width:300px;text-align:right;top:349.00px;font-size:7.0px;color:#555;transform:scaleX(0.95);transform-origin:100% 0;">Close Date</div>
<div style="left:255.5px;top:347px;width:54.0px;height:11.300000000000011px;background:#ececec;border:0.8px solid #e0e0e0;border-bottom:2px solid #cde0f3;border-radius:1px;box-sizing:border-box;"></div>
<svg style="left:301.0px;top:349.84999999999997px;width:6px;height:6px" viewBox="0 0 6 6"><rect x="0.7" y="0.8" width="4.6" height="4.4" fill="none" stroke="#444" stroke-width="0.7"/><rect x="0.7" y="0.8" width="4.6" height="1.3" fill="#444"/></svg>
<div class="t" style="left:44.5px;width:300px;text-align:right;top:349.00px;font-size:7.0px;color:#555;transform:scaleX(0.95);transform-origin:100% 0;">Cost Status</div>
<div style="left:348px;top:347px;width:45.30000000000001px;height:11.300000000000011px;background:#ececec;border:0.8px solid #e0e0e0;border-bottom:2px solid #cde0f3;border-radius:1px;box-sizing:border-box;"></div>
<div class="t" style="left:351.2px;top:349.00px;font-size:7.0px;color:#4a4a4a;transform:scaleX(0.95);transform-origin:0 0;">Open</div>
<svg style="left:386.8px;top:351.45px;width:3px;height:2px" viewBox="0 0 3 2"><path d="M0 0 H3 L1.5 2 Z" fill="#555"/></svg>
<div class="t" style="left:142px;width:300px;text-align:right;top:349.00px;font-size:7.0px;color:#555;transform:scaleX(0.95);transform-origin:100% 0;">Cost Close Date</div>
<div style="left:445.5px;top:347px;width:54.0px;height:11.300000000000011px;background:#ececec;border:0.8px solid #e0e0e0;border-bottom:2px solid #cde0f3;border-radius:1px;box-sizing:border-box;"></div>
<svg style="left:491.0px;top:349.84999999999997px;width:6px;height:6px" viewBox="0 0 6 6"><rect x="0.7" y="0.8" width="4.6" height="4.4" fill="none" stroke="#444" stroke-width="0.7"/><rect x="0.7" y="0.8" width="4.6" height="1.3" fill="#444"/></svg>
<div class="t" style="left:-48px;width:300px;text-align:right;top:362.00px;font-size:7.0px;color:#555;transform:scaleX(0.95);transform-origin:100% 0;">Entry Date</div>
<div style="left:255.5px;top:360.3px;width:54.0px;height:11.199999999999989px;background:#ececec;border:0.8px solid #e0e0e0;border-bottom:2px solid #cde0f3;border-radius:1px;box-sizing:border-box;"></div>
<div class="t" style="left:257.7px;top:362.00px;font-size:7.0px;color:#4a4a4a;transform:scaleX(0.95);transform-origin:0 0;">04/18/2018</div>
<svg style="left:301.0px;top:363.09999999999997px;width:6px;height:6px" viewBox="0 0 6 6"><rect x="0.7" y="0.8" width="4.6" height="4.4" fill="none" stroke="#444" stroke-width="0.7"/><rect x="0.7" y="0.8" width="4.6" height="1.3" fill="#444"/></svg>
<div class="t" style="left:44.5px;width:300px;text-align:right;top:362.00px;font-size:7.0px;color:#555;transform:scaleX(0.95);transform-origin:100% 0;">Entry Time</div>
<div style="left:348px;top:360.3px;width:45.30000000000001px;height:11.199999999999989px;background:#ececec;border:0.8px solid #e0e0e0;border-bottom:2px solid #cde0f3;border-radius:1px;box-sizing:border-box;"></div>
<div class="t" style="left:350.2px;top:362.00px;font-size:7.0px;color:#4a4a4a;transform:scaleX(0.95);transform-origin:0 0;">16:12:11</div>
<div style="left:508px;top:331px;width:272px;height:44px;background:#fff;border:1px solid #f1f1f1;border-right-color:#dadada;border-bottom-color:#d6d6d6;border-radius:1.5px;box-shadow:0.3px 0.5px 0.8px rgba(0,0,0,.10);box-sizing:border-box;"></div>
<div class="t" style="left:511.3px;top:336.00px;font-size:7.3px;color:#333;font-weight:bold;transform:scaleX(0.92);transform-origin:0 0;">EDI</div>
<div style="left:512.5px;top:349.5px;width:6.3px;height:6.3px;border:0.8px solid #b5b5b5;border-radius:1px;box-sizing:border-box;background:#fff;"></div>
<div class="t" style="left:523px;top:349.00px;font-size:7.0px;color:#555;transform:scaleX(0.89);transform-origin:0 0;">PRQ/CSV File Created</div>
<div style="left:28px;top:379px;width:752px;height:22px;background:#fff;border:1px solid #f1f1f1;border-right-color:#dadada;border-bottom-color:#d6d6d6;border-radius:1.5px;box-shadow:0.3px 0.5px 0.8px rgba(0,0,0,.10);box-sizing:border-box;"></div>
<div style="left:31.5px;top:382.1px;width:39.7px;height:11.699999999999989px;background:#1976d2;border-radius:1px;"></div>
<div class="t" style="left:-98.65px;width:300px;text-align:center;top:384.63px;font-size:7.1px;color:#fff;transform:scaleX(0.93);transform-origin:50% 0;-webkit-text-stroke:0.12px #fff;">Preview</div>
<div style="left:75px;top:382.1px;width:53.30000000000001px;height:11.699999999999989px;background:#1976d2;border-radius:1px;"></div>
<div class="t" style="left:-48.349999999999994px;width:300px;text-align:center;top:384.63px;font-size:7.1px;color:#fff;transform:scaleX(0.93);transform-origin:50% 0;-webkit-text-stroke:0.12px #fff;">Print/Fax/E-Mail</div>
<div style="left:132px;top:382.1px;width:39.80000000000001px;height:11.699999999999989px;background:#1976d2;border-radius:1px;"></div>
<div class="t" style="left:1.9000000000000057px;width:300px;text-align:center;top:384.63px;font-size:7.1px;color:#fff;transform:scaleX(0.93);transform-origin:50% 0;-webkit-text-stroke:0.12px #fff;">Attachment</div>
<div style="left:176.3px;top:382.1px;width:39.5px;height:11.699999999999989px;background:#1976d2;border-radius:1px;"></div>
<div class="t" style="left:46.05000000000001px;width:300px;text-align:center;top:384.63px;font-size:7.1px;color:#fff;transform:scaleX(0.93);transform-origin:50% 0;-webkit-text-stroke:0.12px #fff;">Availability</div>
<div style="left:220px;top:382.1px;width:39.5px;height:11.699999999999989px;background:#bdbdbd;border-radius:1px;"></div>
<div class="t" style="left:89.75px;width:300px;text-align:center;top:384.63px;font-size:7.1px;color:#e0e0e0;transform:scaleX(0.93);transform-origin:50% 0;-webkit-text-stroke:0.12px #e0e0e0;">Configure</div>
<div style="left:263.8px;top:382.1px;width:39.19999999999999px;height:11.699999999999989px;background:#1976d2;border-radius:1px;"></div>
<div class="t" style="left:133.39999999999998px;width:300px;text-align:center;top:384.63px;font-size:7.1px;color:#fff;transform:scaleX(0.93);transform-origin:50% 0;-webkit-text-stroke:0.12px #fff;">Costs</div>
<div style="left:307.5px;top:382.1px;width:66.30000000000001px;height:11.699999999999989px;background:#1976d2;border-radius:1px;"></div>
<div class="t" style="left:190.64999999999998px;width:300px;text-align:center;top:384.63px;font-size:7.1px;color:#fff;transform:scaleX(0.93);transform-origin:50% 0;-webkit-text-stroke:0.12px #fff;">Demand Documents</div>
<div style="left:378px;top:382.1px;width:39.5px;height:11.699999999999989px;background:#1976d2;border-radius:1px;"></div>
<div class="t" style="left:247.75px;width:300px;text-align:center;top:384.63px;font-size:7.1px;color:#fff;transform:scaleX(0.93);transform-origin:50% 0;-webkit-text-stroke:0.12px #fff;">Description</div>
<div style="left:421.3px;top:382.1px;width:39.5px;height:11.699999999999989px;background:#1976d2;border-radius:1px;"></div>
<div class="t" style="left:291.05px;width:300px;text-align:center;top:384.63px;font-size:7.1px;color:#fff;transform:scaleX(0.93);transform-origin:50% 0;-webkit-text-stroke:0.12px #fff;">Documents</div>
<div style="left:465px;top:382.1px;width:40px;height:11.699999999999989px;background:#1976d2;border-radius:1px;"></div>
<div class="t" style="left:335.0px;width:300px;text-align:center;top:384.63px;font-size:7.1px;color:#fff;transform:scaleX(0.93);transform-origin:50% 0;-webkit-text-stroke:0.12px #fff;">Image</div>
<div style="left:508.8px;top:382.1px;width:39.99999999999994px;height:11.699999999999989px;background:#1976d2;border-radius:1px;"></div>
<div class="t" style="left:378.79999999999995px;width:300px;text-align:center;top:384.63px;font-size:7.1px;color:#fff;transform:scaleX(0.93);transform-origin:50% 0;-webkit-text-stroke:0.12px #fff;">Notification</div>
<div style="left:22px;top:412px;width:765px;height:17.5px;background:#fff;border:1px solid #f1f1f1;border-right-color:#dadada;border-bottom-color:#d6d6d6;border-radius:1.5px;box-shadow:0.3px 0.5px 0.8px rgba(0,0,0,.10);box-sizing:border-box;"></div>
<div style="left:24.6px;top:415px;width:39.4px;height:11.899999999999977px;background:#bdbdbd;border-radius:1px;"></div>
<div class="t" style="left:-105.7px;width:300px;text-align:center;top:417.63px;font-size:7.1px;color:#e0e0e0;transform:scaleX(0.93);transform-origin:50% 0;-webkit-text-stroke:0.12px #e0e0e0;">OK</div>
<div style="left:68.5px;top:415px;width:39.3px;height:11.899999999999977px;background:#1976d2;border-radius:1px;"></div>
<div class="t" style="left:-61.849999999999994px;width:300px;text-align:center;top:417.63px;font-size:7.1px;color:#fff;transform:scaleX(0.93);transform-origin:50% 0;-webkit-text-stroke:0.12px #fff;">Cancel</div>
<div style="left:19px;top:429.5px;width:776px;height:15px;background:#f8f8f8;"></div>
<svg style="left:387px;top:23px;width:26px;height:26px" viewBox="0 0 26 26"><circle cx="13" cy="12.8" r="12.2" fill="#4b4e53"/><path d="M9.6 9.4 L16.4 16.2 M16.4 9.4 L9.6 16.2" stroke="#fff" stroke-width="1.3"/></svg>
</body></html>
